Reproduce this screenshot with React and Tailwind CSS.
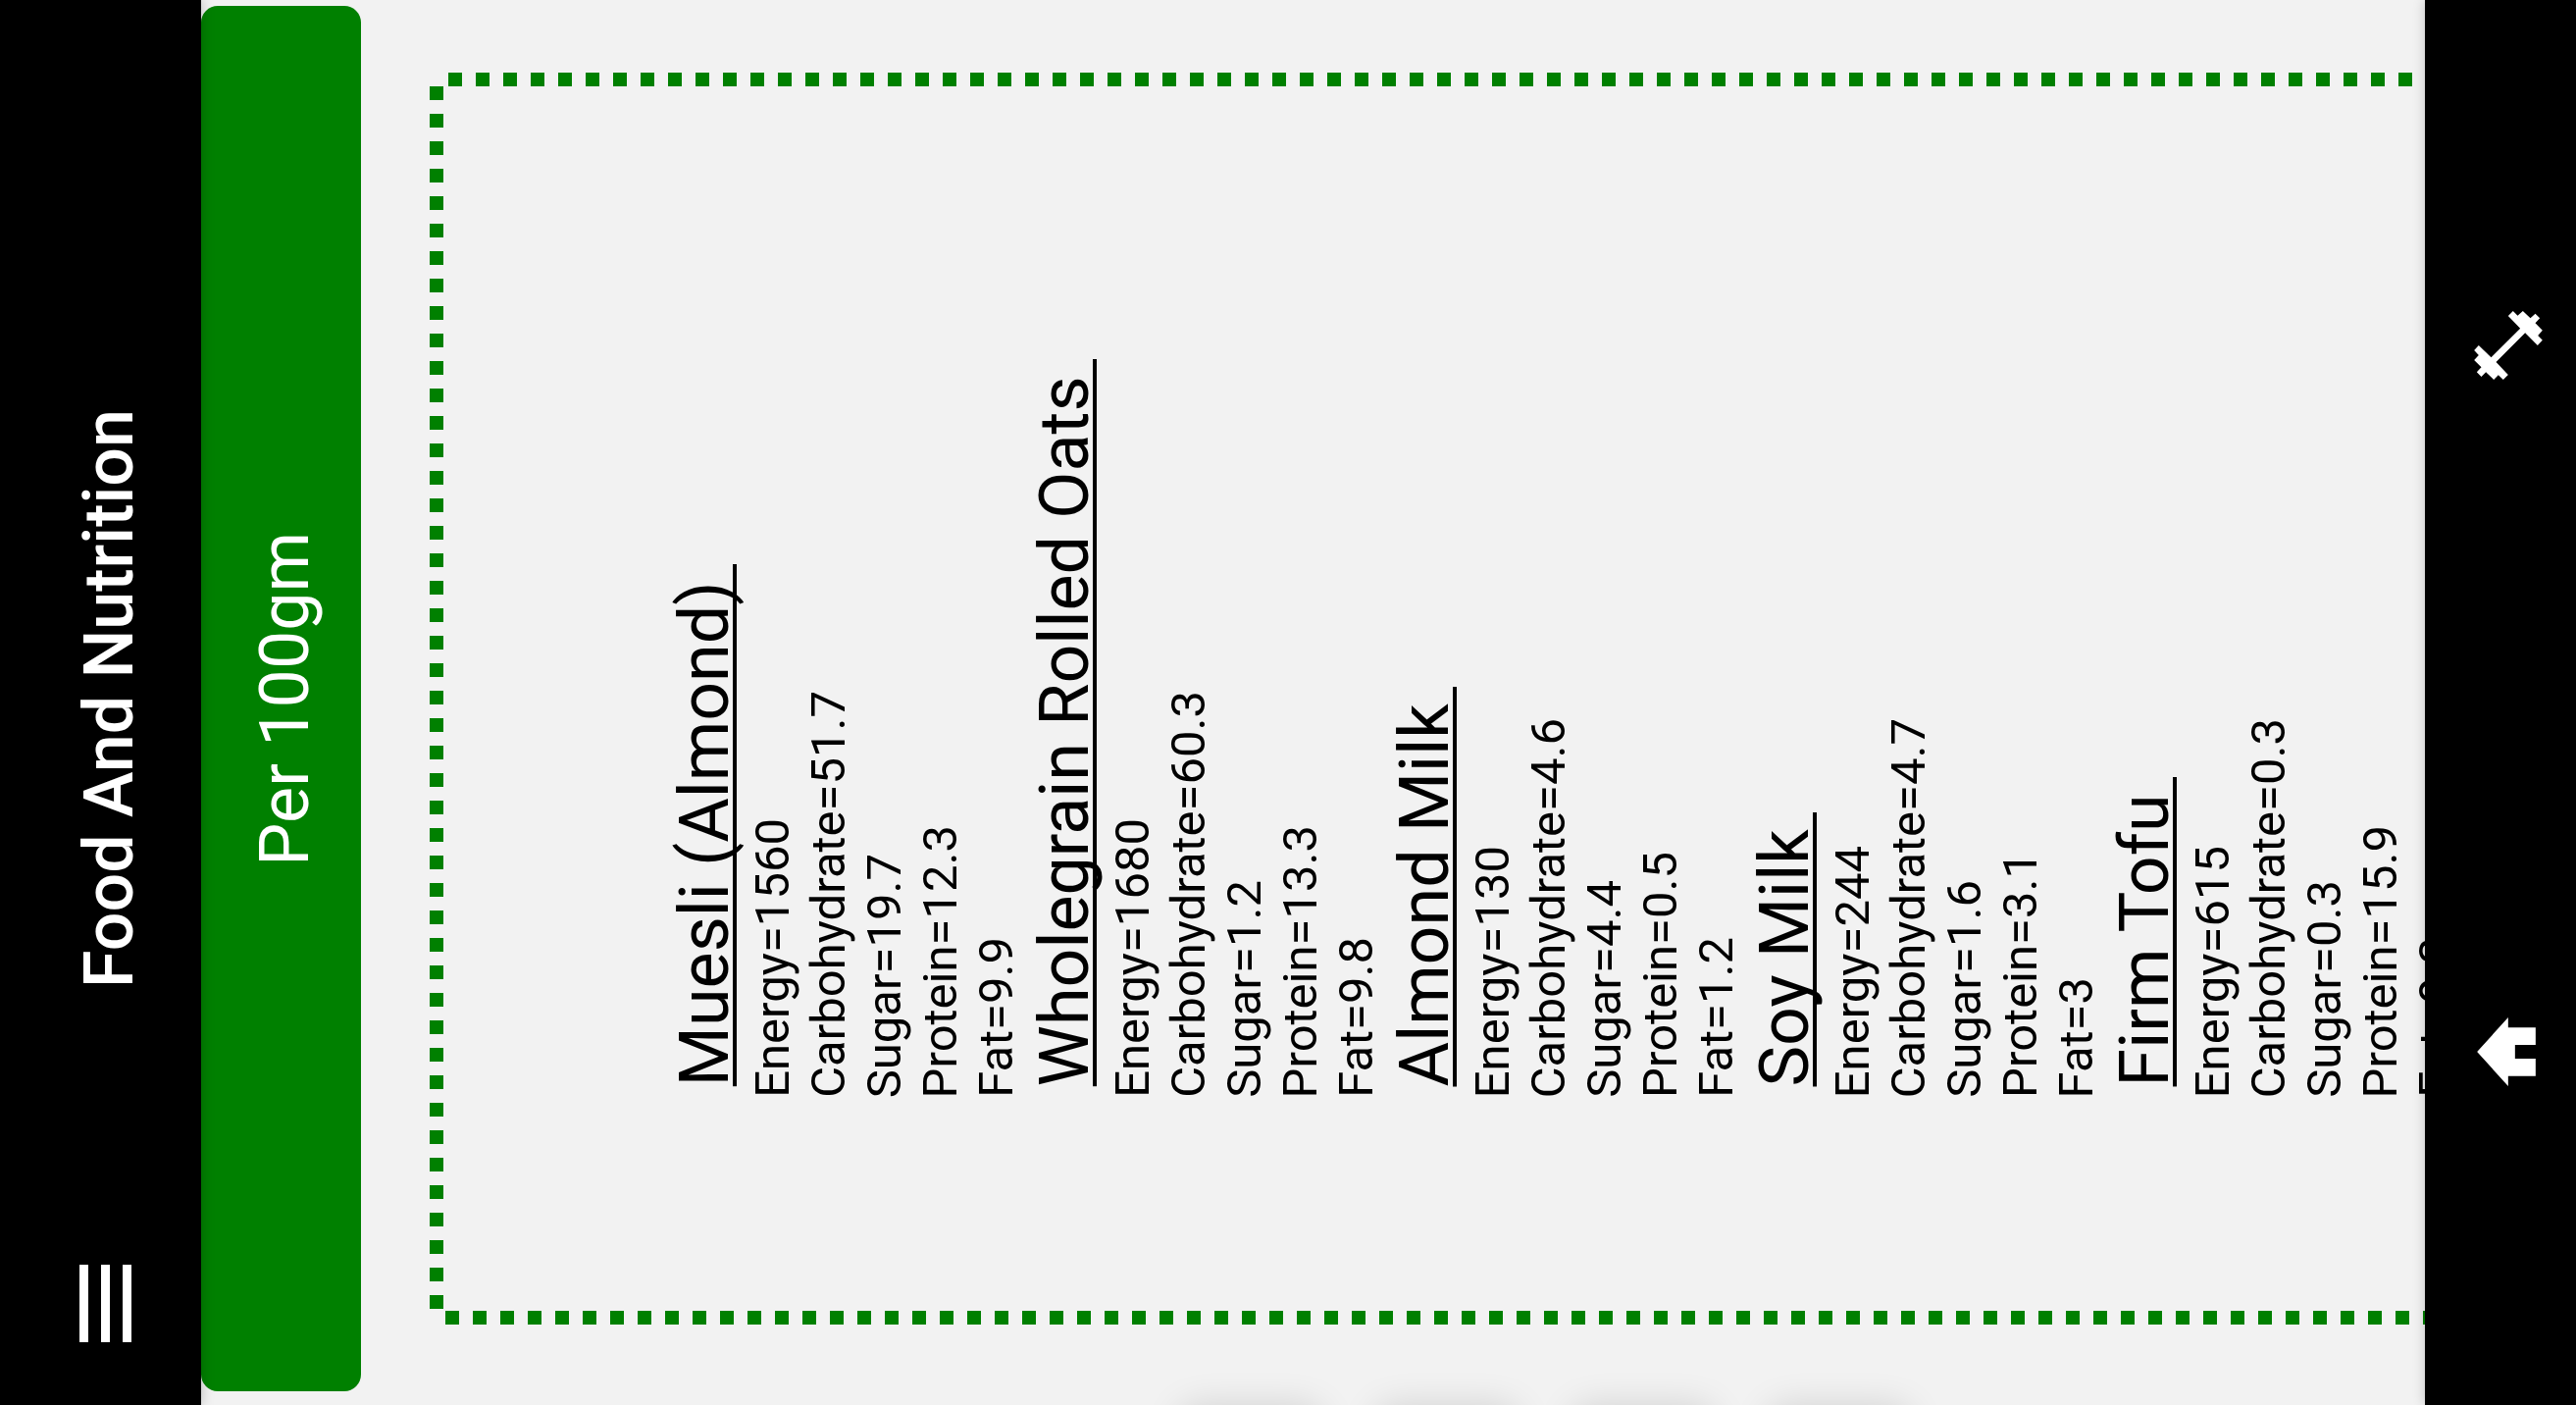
const foods = [
  { name: 'Muesli (Almond)', facts: ['Energy=1560', 'Carbohydrate=51.7', 'Sugar=19.7', 'Protein=12.3', 'Fat=9.9'] },
  { name: 'Wholegrain Rolled Oats', facts: ['Energy=1680', 'Carbohydrate=60.3', 'Sugar=1.2', 'Protein=13.3', 'Fat=9.8'] },
  { name: 'Almond Milk', facts: ['Energy=130', 'Carbohydrate=4.6', 'Sugar=4.4', 'Protein=0.5', 'Fat=1.2'] },
  { name: 'Soy Milk', facts: ['Energy=244', 'Carbohydrate=4.7', 'Sugar=1.6', 'Protein=3.1', 'Fat=3'] },
  { name: 'Firm Tofu', facts: ['Energy=615', 'Carbohydrate=0.3', 'Sugar=0.3', 'Protein=15.9', 'Fat=9.3'] },
];

function Header() {
  return (
    <header className="relative z-10 grid w-[205px] shrink-0 grid-rows-[1fr_auto_1fr] justify-items-start bg-black pb-2 text-white shadow-[0_0_12px_rgba(0,0,0,0.25)]">
      <h1 className="row-start-2 ml-[70px] whitespace-nowrap text-[70px] leading-[82px] font-medium [writing-mode:sideways-lr]">
        Food And Nutrition
      </h1>
      <button type="button" aria-label="Open menu" className="row-start-3 mb-14 ml-[81px] flex gap-[13px] self-end">
        <span className="h-[79px] w-[9px] bg-white" />
        <span className="h-[79px] w-[9px] bg-white" />
        <span className="h-[79px] w-[9px] bg-white" />
      </button>
    </header>
  );
}

function FoodEntry({ name, facts }) {
  return (
    <article className="flex shrink-0 items-end">
      <h2 className="mb-3 whitespace-pre text-[70px] leading-[82px] underline decoration-4 underline-offset-[5px] [text-decoration-skip-ink:none] [writing-mode:sideways-lr]">
        {name + ' '}
      </h2>
      <ul className="flex items-end">
        {facts.map((fact) => (
          <li key={fact} className="whitespace-nowrap text-[49px] leading-[57px] [writing-mode:sideways-lr]">
            {fact}
          </li>
        ))}
      </ul>
    </article>
  );
}

function FoodPanel() {
  return (
    <section
      aria-label="Nutrition per 100gm"
      className="mt-[74px] mb-[82px] ml-[70px] flex min-w-0 flex-1 items-end overflow-hidden bg-[image:repeating-linear-gradient(to_right,green_0_14px,transparent_14px_28px),repeating-linear-gradient(to_bottom,green_0_14px,transparent_14px_28px),repeating-linear-gradient(to_right,green_0_14px,transparent_14px_28px)] bg-[position:19px_0,0_14px,16px_100%] bg-[size:100%_14px,14px_calc(100%-28px),100%_14px] bg-no-repeat pb-[231px] pl-[239px]"
    >
      {foods.map((food) => (
        <FoodEntry key={food.name} {...food} />
      ))}
    </section>
  );
}

function TabBar() {
  return (
    <nav className="relative z-10 flex w-[154px] shrink-0 flex-col gap-4 bg-black pb-2 text-white shadow-[0_0_12px_rgba(0,0,0,0.2)]">
      <button type="button" aria-label="Exercise" className="flex flex-1 items-center pl-[50px]">
        <svg width="70" height="70" viewBox="427 171 209 210" fill="currentColor" aria-hidden="true">
          <path d="M546 171 560 185 576 171 599 193 614 179 628 193 614 208 636 230 622 246 636 260 621 276 583 238 494 327 531 366 516 381 501 367 487 381 463 358 449 372 435 358 449 343 427 321 441 306 427 291 441 276 479 313 568 224 531 186Z" />
        </svg>
      </button>
      <button type="button" aria-label="Home" className="flex flex-1 items-center pl-[53px]">
        <svg width="60" height="70" viewBox="436 231 179 210" fill="currentColor" aria-hidden="true">
          <path d="M436 336 531 231V262H615V315H552V357H615V410H531V441Z" />
        </svg>
      </button>
    </nav>
  );
}

export default function App() {
  return (
    <div className="relative flex h-screen overflow-hidden bg-[#f2f2f2] font-[Roboto,sans-serif] text-black">
      <Header />
      <main className="flex min-w-0 flex-1">
        <button
          type="button"
          className="mt-[6px] mb-[14px] flex w-[163px] shrink-0 items-center rounded-[17px] bg-[green] pl-11 text-white"
        >
          <span className="whitespace-nowrap text-[70px] leading-[82px] [writing-mode:sideways-lr]">Per 100gm</span>
        </button>
        <FoodPanel />
      </main>
      <TabBar />
      <div aria-hidden="true" className="absolute top-full left-[1200px] flex gap-[50px]">
        <span className="h-20 w-[150px] rounded-3xl shadow-[0_0_36px_rgba(0,0,0,0.13)]" />
        <span className="h-20 w-[150px] rounded-3xl shadow-[0_0_36px_rgba(0,0,0,0.13)]" />
        <span className="h-20 w-[150px] rounded-3xl shadow-[0_0_36px_rgba(0,0,0,0.13)]" />
        <span className="h-20 w-[150px] rounded-3xl shadow-[0_0_36px_rgba(0,0,0,0.13)]" />
      </div>
    </div>
  );
}
